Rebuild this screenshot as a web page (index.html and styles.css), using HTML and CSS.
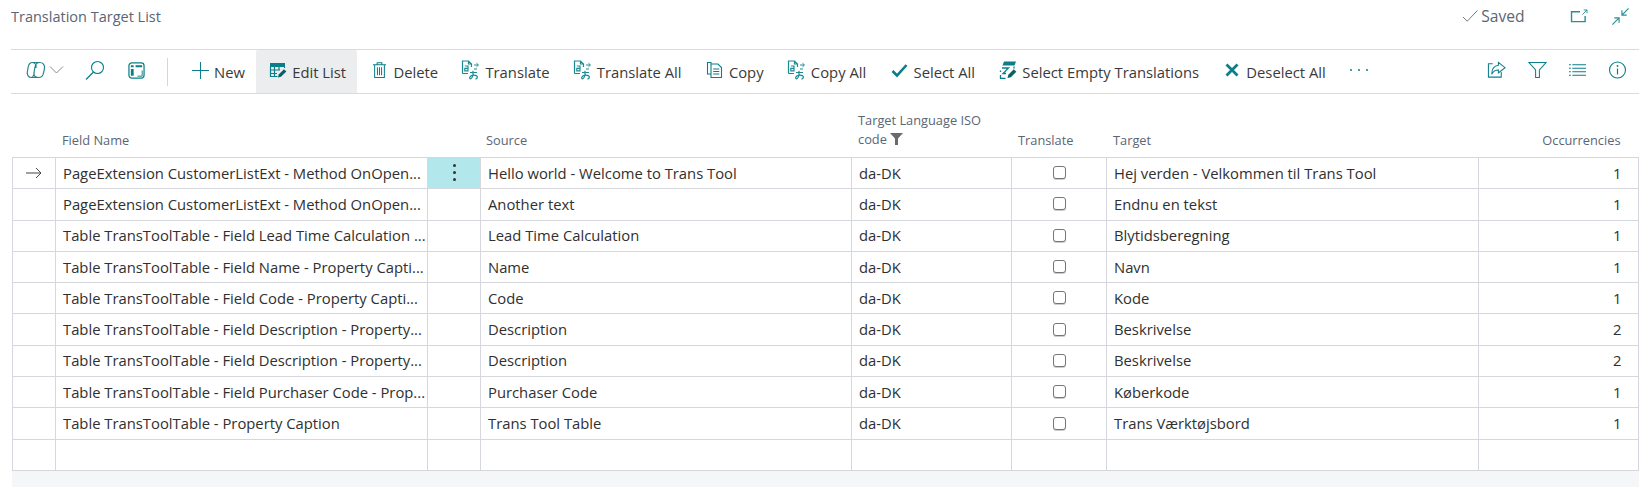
FILE: index.html
```html
<!DOCTYPE html>
<html lang="en">
<head>
<meta charset="utf-8">
<title>Translation Target List</title>
<link rel="stylesheet" href="styles.css">
</head>
<body>
<svg class="defs" width="0" height="0" aria-hidden="true">
  <defs>
    <symbol id="i-tr" viewBox="0 0 20 20">
      <path d="M1.500 13.500V1H7.500L10.500 4V7M7.500 1V4H10.500M1.500 13.500H7" fill="none" stroke="currentColor" stroke-width="1.200"/>
      <path d="M3.800 6H7V10.800H3.800V8.400H7" fill="none" stroke="currentColor" stroke-width="1.200"/>
      <path d="M13 5H17M15.500 3.200L17.500 5L15.500 6.800M13 9H16" fill="none" stroke="currentColor" stroke-width="1"/>
      <path d="M9 12.500H16M12 10.800V14.500C11.500 17 10.500 18.800 9.500 18.800C8 18.800 8.500 15.800 11.500 15.300C14.500 14.800 17 15.800 16.300 17.800C16 18.600 15.300 19 14.500 19.200" fill="none" stroke="currentColor" stroke-width="1.200"/>
    </symbol>
  </defs>
</svg>

<header class="titlebar">
  <h1 class="title">Translation Target List</h1>
  <div class="status">
    <svg class="ic-saved" viewBox="0 0 18 14"><path d="M1 8L5.500 12.500L16.500 1" fill="none" stroke="currentColor"/></svg>
    <span>Saved</span>
  </div>
  <svg class="ic-top ic-open" viewBox="0 0 20 16"><path d="M10.500 3H1.500V13.500H16V7.500" fill="none" stroke="currentColor" stroke-width="1.500"/><path d="M13 6L18 1M14.500 1H18V4.500" fill="none" stroke="currentColor" stroke-width="1"/></svg>
  <svg class="ic-top ic-collapse" viewBox="0 0 20 20"><path d="M11.500 8.500L18.500 1.500M11.500 3.500V8.500H16.500M8.500 11.500L1.500 18.500M3.500 11.500H8.500V16.500" fill="none" stroke="currentColor" stroke-width="1.200"/></svg>
</header>

<nav class="toolbar">
  <div class="tools-left">
    <svg class="ic ic-copilot" viewBox="0 0 20 18"><path d="M6.500 1.500H13.500C17 1.500 19 4 18.500 7.500L17.500 12C17 15 15 16.500 12.500 16.500H5.500C2.500 16.500 .8 14 1.300 11L2.300 5.500C2.800 3 4.500 1.500 6.500 1.500Z" fill="none" stroke="currentColor" stroke-width="1.200"/><path d="M13.500 1.500C10.500 1.500 9.500 3.500 9 6L8 11.500C7.500 14.500 9 16.500 12.500 16.500M6.500 1.500C9 2 10.500 4 10 7M5.500 16.500C7 16 8 14.500 8.200 11" fill="none" stroke="currentColor" stroke-width="1.200"/></svg>
    <svg class="ic-chev" viewBox="0 0 14 8"><path d="M.5 .5L7 7L13.500 .5" fill="none" stroke="currentColor"/></svg>
    <svg class="ic ic-search" viewBox="0 0 20 20"><circle cx="12.500" cy="7.500" r="6" fill="none" stroke="currentColor" stroke-width="1.100"/><path d="M8.500 12L1 19.500" fill="none" stroke="currentColor" stroke-width="1.300"/></svg>
    <svg class="ic ic-layout" viewBox="0 0 18 18"><rect x="1" y="1" width="16" height="16" rx="3" fill="none" stroke="currentColor" stroke-width="1.300"/><path d="M3 3.500H6V5.500H3ZM8 3.500H15V5.500H8ZM3 7.500H6V14.500H3Z" fill="currentColor"/><path d="M15 9V15H10" fill="none" stroke="currentColor"/></svg>
    <span class="sep"></span>
  </div>
  <button class="cmd"><span class="slot"><svg class="ic-plus" viewBox="0 0 18 18"><path d="M9 0V18M0 9H18" stroke="currentColor" stroke-width="1.100"/></svg></span>New</button>
  <button class="cmd cmd-active"><span class="slot"><svg class="ic-cmd" viewBox="0 0 18 16"><path d="M1 1H16V5H1Z" fill="currentColor"/><path d="M1.500 5V14.500H8.500M1.500 8H11M1.500 11.500H8M5.500 5V14.500M10 5V8M15.500 5V6" fill="none" stroke="currentColor" stroke-width="1.200"/><path d="M9 15.500L9.700 12.500L15 7.200L17.300 9.500L12 14.800Z" fill="#0b5f68"/></svg></span>Edit List</button>
  <button class="cmd"><span class="slot"><svg class="ic-cmd ic-del" viewBox="0 0 16 18"><path d="M1 3.500H15M5.500 3.500V1.200H10.500V3.500M2.800 3.500V17H13.200V3.500" fill="none" stroke="currentColor" stroke-width="1.100"/><path d="M5.800 6V14.500M8 6V14.500M10.200 6V14.500" stroke="currentColor" stroke-width="1.100"/></svg></span>Delete</button>
  <button class="cmd"><span class="slot"><svg class="ic-cmd ic-tr"><use href="#i-tr"/></svg></span>Translate</button>
  <button class="cmd"><span class="slot"><svg class="ic-cmd ic-tr"><use href="#i-tr"/></svg></span>Translate All</button>
  <button class="cmd"><span class="slot"><svg class="ic-cmd" viewBox="0 0 18 18"><path d="M5 3.500V1.500H1.500V13H5M5 3H12L15.500 6.500V16.500H5ZM7.200 8H13.300M7.200 10.500H13.300M7.200 13H13.300" fill="none" stroke="currentColor" stroke-width="1.100"/></svg></span>Copy</button>
  <button class="cmd"><span class="slot"><svg class="ic-cmd ic-tr"><use href="#i-tr"/></svg></span>Copy All</button>
  <button class="cmd"><span class="slot"><svg class="ic-cmd ic-check" viewBox="0 0 17 15"><path d="M1.500 8L6 12.500L15.500 2" fill="none" stroke="currentColor" stroke-width="2.600"/></svg></span>Select All</button>
  <button class="cmd"><span class="slot"><svg class="ic-cmd ic-empty" viewBox="0 0 18 18"><path d="M5 .5H17L15.500 4.500H3.500Z" fill="currentColor"/><path d="M3 7H9.500L4 12.500L7 12.500M1.500 14V17.500H6.500M15 5.500V7.500M1.500 9.500V11" fill="none" stroke="currentColor" stroke-width="1.300"/><path d="M8.500 17L9.300 13.700L14.800 8.200L17.300 10.700L11.800 16.200Z" fill="#0b5f68"/></svg></span>Select Empty Translations</button>
  <button class="cmd"><span class="slot"><svg class="ic-cmd ic-x" viewBox="0 0 14 14"><path d="M1.500 1.500L12.500 12.500M12.500 1.500L1.500 12.500" stroke="currentColor" stroke-width="2.800"/></svg></span>Deselect All</button>
  <span class="more" aria-label="More"><i></i><i></i><i></i></span>
  <div class="tools-right">
    <svg class="ic-r" viewBox="0 0 20 18"><path d="M6 2.500H1.500V16.500H15V11" fill="none" stroke="currentColor" stroke-width="1.100"/><path d="M12 1L19 6.500L12 12V9C9 9 6.500 10 5 13.500C5 8.500 7.500 4.500 12 4Z" fill="none" stroke="currentColor" stroke-width="1.100"/></svg>
    <svg class="ic-r" viewBox="0 0 20 18"><path d="M.8 1H19.200L12 9V17H8V9Z" fill="none" stroke="currentColor" stroke-width="1.100"/></svg>
    <svg class="ic-r" viewBox="0 0 18 14"><path d="M0 1.500H2M3.500 1.500H18M0 5.200H2M3.500 5.200H18M0 8.900H2M3.500 8.900H18M0 12.600H2M3.500 12.600H18" stroke="currentColor" stroke-width="1.200"/></svg>
    <svg class="ic-r" viewBox="0 0 18 18"><circle cx="9" cy="9" r="8" fill="none" stroke="currentColor" stroke-width="1.100"/><path d="M9 7.500V13.500" stroke="currentColor" stroke-width="1.200"/><circle cx="9" cy="5" r=".9" fill="currentColor"/></svg>
  </div>
</nav>

<main class="list">
  <div class="head">
    <div class="hc"></div>
    <div class="hc">Field Name</div>
    <div class="hc"></div>
    <div class="hc hc-source">Source</div>
    <div class="hc hc-lang">Target Language ISO code <svg class="ic-funnel" viewBox="0 0 13 12"><path d="M0 0H13L8 5.500V12H5V5.500Z" fill="currentColor"/></svg></div>
    <div class="hc">Translate</div>
    <div class="hc">Target</div>
    <div class="hc hc-right">Occurrencies</div>
  </div>
  <div class="grid">
    <div class="cell cell-arrow"><svg class="ic-arrow" viewBox="0 0 16 12"><path d="M0 6H15M10 1L15 6L10 11" fill="none" stroke="currentColor"/></svg></div><div class="cell">PageExtension CustomerListExt - Method OnOpen...</div><div class="cell cell-menu"><span class="dots"><i></i><i></i><i></i></span></div><div class="cell">Hello world - Welcome to Trans Tool</div><div class="cell">da-DK</div><div class="cell cell-check"><span class="box"></span></div><div class="cell">Hej verden - Velkommen til Trans Tool</div><div class="cell cell-num">1</div>
    <div class="cell"></div><div class="cell">PageExtension CustomerListExt - Method OnOpen...</div><div class="cell"></div><div class="cell">Another text</div><div class="cell">da-DK</div><div class="cell cell-check"><span class="box"></span></div><div class="cell">Endnu en tekst</div><div class="cell cell-num">1</div>
    <div class="cell"></div><div class="cell">Table TransToolTable - Field Lead Time Calculation ...</div><div class="cell"></div><div class="cell">Lead Time Calculation</div><div class="cell">da-DK</div><div class="cell cell-check"><span class="box"></span></div><div class="cell">Blytidsberegning</div><div class="cell cell-num">1</div>
    <div class="cell"></div><div class="cell">Table TransToolTable - Field Name - Property Capti...</div><div class="cell"></div><div class="cell">Name</div><div class="cell">da-DK</div><div class="cell cell-check"><span class="box"></span></div><div class="cell">Navn</div><div class="cell cell-num">1</div>
    <div class="cell"></div><div class="cell">Table TransToolTable - Field Code - Property Capti...</div><div class="cell"></div><div class="cell">Code</div><div class="cell">da-DK</div><div class="cell cell-check"><span class="box"></span></div><div class="cell">Kode</div><div class="cell cell-num">1</div>
    <div class="cell"></div><div class="cell">Table TransToolTable - Field Description - Property...</div><div class="cell"></div><div class="cell">Description</div><div class="cell">da-DK</div><div class="cell cell-check"><span class="box"></span></div><div class="cell">Beskrivelse</div><div class="cell cell-num">2</div>
    <div class="cell"></div><div class="cell">Table TransToolTable - Field Description - Property...</div><div class="cell"></div><div class="cell">Description</div><div class="cell">da-DK</div><div class="cell cell-check"><span class="box"></span></div><div class="cell">Beskrivelse</div><div class="cell cell-num">2</div>
    <div class="cell"></div><div class="cell">Table TransToolTable - Field Purchaser Code - Prop...</div><div class="cell"></div><div class="cell">Purchaser Code</div><div class="cell">da-DK</div><div class="cell cell-check"><span class="box"></span></div><div class="cell">Køberkode</div><div class="cell cell-num">1</div>
    <div class="cell"></div><div class="cell">Table TransToolTable - Property Caption</div><div class="cell"></div><div class="cell">Trans Tool Table</div><div class="cell">da-DK</div><div class="cell cell-check"><span class="box"></span></div><div class="cell">Trans Værktøjsbord</div><div class="cell cell-num">1</div>
    <div class="cell"></div><div class="cell"></div><div class="cell"></div><div class="cell"></div><div class="cell"></div><div class="cell"></div><div class="cell"></div><div class="cell"></div>
  </div>
  <div class="foot"></div>
</main>
</body>
</html>
```

FILE: styles.css
```css
* { box-sizing: border-box; }
html, body { margin: 0; height: 100%; }
body {
  background: #fff;
  color: #212121;
  font-family: "Open Sans", "Noto Sans", "Liberation Sans", sans-serif;
  font-size: 14.800px;
  overflow: hidden;
  padding: 0 9.500px 0 12px;
}
.defs { position: absolute; }

.titlebar { height: 49px; display: flex; align-items: flex-start; color: #5a6675; }
.title { margin: 7px 0 0 -1px; font-size: 14.500px; font-weight: 400; line-height: 20px; flex: 1; }
.status { display: flex; align-items: center; gap: 2px; margin-top: 6px; height: 20px; font-size: 15.600px; margin-right: 45px; }
.ic-saved { width: 17px; height: 14px; color: #6a7480; }
.ic-top { color: #2a8f96; margin-top: 9px; }
.ic-open { width: 19px; height: 15px; margin-right: 22px; }
.ic-collapse { width: 19px; height: 19px; margin-top: 7px; margin-right: 9px; }

.toolbar {
  height: 45px;
  margin-left: -1px;
  border-top: 1px solid #d9dadc;
  border-bottom: 1px solid #d9dadc;
  display: flex;
  align-items: center;
  color: #3a3a3a;
}
.ic, .ic-cmd, .ic-plus, .ic-r, .more { color: #0a7f89; flex: none; }
.tools-left { display: flex; align-items: center; height: 100%; flex: none; }
.tools-left svg { margin-bottom: 3px; }
.ic-copilot { width: 20px; height: 18px; margin-left: 15px; color: #23868e; }
.ic-chev { width: 15px; height: 8px; margin-left: 3px; color: #8b8b8b; }
.ic-search { width: 20px; height: 20px; margin-left: 21px; }
.ic-layout { width: 17px; height: 17px; margin-left: 23px; }
.sep { width: 1px; height: 28px; background: #d6d6d6; margin: 0 0 0 22px; }

.cmd {
  height: 100%;
  border: 0;
  background: none;
  font: inherit;
  font-size: 14.800px;
  color: inherit;
  display: flex;
  align-items: center;
  white-space: nowrap;
  padding: 0 11.300px 0 13px;
}
.tools-left + .cmd { margin-left: 10px; }
.cmd-active { background: #ecedef; border-radius: 2px 2px 0 0; }
.slot { width: 18px; height: 20px; margin-right: 5px; display: flex; align-items: center; justify-content: center; margin-top: -3px; flex: none; }
.ic-plus { width: 17px; height: 17px; }
.ic-cmd { width: 18px; height: 18px; flex: none; }
.ic-del { width: 15px; height: 18px; }
.ic-tr { width: 20px; height: 20px; color: #1d8a92; }
.ic-check { width: 17px; height: 15px; }
.ic-x { width: 14px; height: 14px; }
.more { display: flex; gap: 6px; margin-left: 13px; margin-top: -4px; }
.more i { width: 2px; height: 2px; background: #0a7f89; border-radius: 50%; }
.tools-right { margin-left: auto; display: flex; align-items: center; gap: 22px; margin-right: 12px; margin-bottom: 3px; }
.ic-r { width: 19px; height: 18px; }
.ic-r:nth-child(3) { width: 17px; height: 14px; }

.head, .grid {
  display: grid;
  grid-template-columns: 43px 372px 53px 371px 160px 95px 372px 1fr;
}
.head { height: 63px; align-items: end; color: #5a6675; font-size: 12.800px; padding-bottom: 8px; }
.hc { padding: 0 7px; line-height: 18px; }
.hc-source { padding-left: 6px; }
.hc-lang { padding-right: 8px; line-height: 19px; }
.hc-right { text-align: right; padding-right: 18px; }
.ic-funnel { width: 13px; height: 12px; color: #6a6a6a; vertical-align: -1px; }

.grid {
  grid-auto-rows: 31.300px;
  border-top: 1px solid #d5d7dd;
  border-left: 1px solid #d5d7dd;
}
.cell {
  border-right: 1px solid #d5d7dd;
  border-bottom: 1px solid #d5d7dd;
  padding: 0 7px 1px;
  display: flex;
  align-items: center;
  white-space: nowrap;
  overflow: hidden;
  color: #303030;
}
.cell-arrow { justify-content: center; color: #444; }
.ic-arrow { width: 16px; height: 12px; }
.cell-menu { background: #b2e8ec; justify-content: center; }
.dots { display: flex; flex-direction: column; gap: 4px; }
.dots i { width: 3px; height: 3px; border-radius: 50%; background: #333; }
.cell-check { justify-content: center; }
.box { width: 13px; height: 13px; border: 1px solid #767676; border-radius: 3px; background: #fff; box-shadow: 0 1px 0 #ccc; }
.cell-num { justify-content: flex-end; padding-right: 16px; }
.foot { height: 20px; background: #f5f6f8; }
```
